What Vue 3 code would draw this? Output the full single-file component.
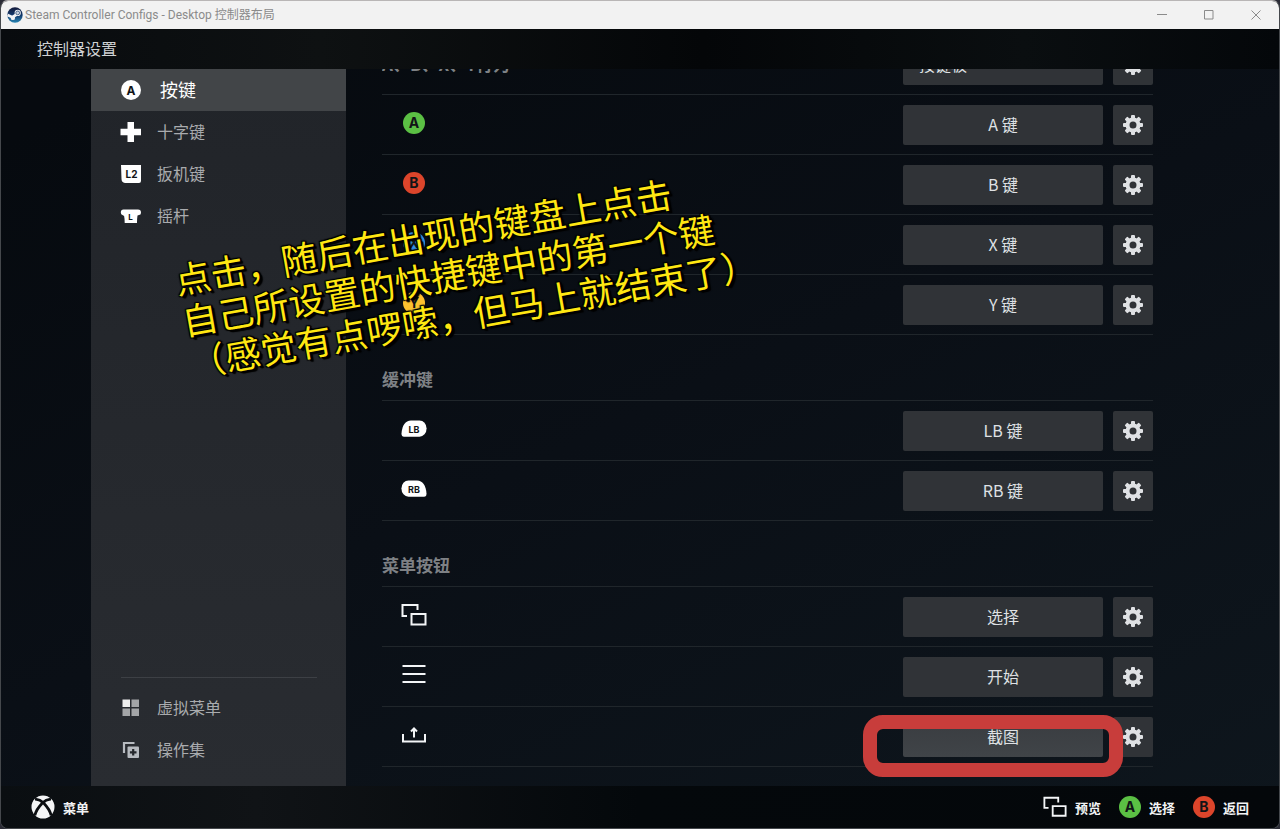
<script setup>
import { ref } from 'vue'

const gearTeeth = [0, 45, 90, 135, 180, 225, 270, 315]

const tabs = [
  { id: 'buttons', label: '按键' },
  { id: 'dpad', label: '十字键' },
  { id: 'triggers', label: '扳机键' },
  { id: 'sticks', label: '摇杆' },
]
const extras = [
  { id: 'virtual', label: '虚拟菜单' },
  { id: 'sets', label: '操作集' },
]
const active = ref('buttons')
const behavior = ref('pad')

const groups = [
  {
    id: 'face',
    title: 'A、B、X、Y行为',
    select: true,
    rows: [
      { id: 'a', label: 'A 键', letter: 'A', color: '#5bc044' },
      { id: 'b', label: 'B 键', letter: 'B', color: '#dc452b' },
      { id: 'x', label: 'X 键', letter: 'X', color: '#2f8fe8' },
      { id: 'y', label: 'Y 键', letter: 'Y', color: '#fdc12f' },
    ],
  },
  {
    id: 'bumpers',
    title: '缓冲键',
    rows: [
      { id: 'lb', label: 'LB 键' },
      { id: 'rb', label: 'RB 键' },
    ],
  },
  {
    id: 'menu',
    title: '菜单按钮',
    rows: [
      { id: 'view', label: '选择' },
      { id: 'start', label: '开始' },
      { id: 'share', label: '截图', marked: true },
    ],
  },
]
</script>

<template>
  <div class="window">
    <header class="titlebar">
      <svg class="steam" viewBox="0 0 16 16" aria-hidden="true">
        <defs>
          <linearGradient id="steamFill" x1="0" y1="0" x2="0" y2="1">
            <stop offset="0" stop-color="#141b3c" />
            <stop offset="0.5" stop-color="#12386a" />
            <stop offset="1" stop-color="#2a86b4" />
          </linearGradient>
        </defs>
        <circle cx="8" cy="8" r="7.7" fill="url(#steamFill)" />
        <path d="M.5 8 5.500 10.200 9.500 7.500" fill="none" stroke="#f2f4f6" stroke-width="2.800" />
        <circle cx="10.700" cy="5.900" r="3.100" fill="#f2f4f6" />
        <circle cx="10.700" cy="5.900" r="1.900" fill="#c9d3de" stroke="#173a68" stroke-width="0.700" />
        <circle cx="5.900" cy="10.900" r="2.200" fill="#f2f4f6" />
      </svg>
      <span class="caption">Steam Controller Configs - Desktop 控制器布局</span>
      <div class="controls">
        <button type="button" aria-label="最小化"><svg viewBox="0 0 10 10"><path d="M0 4.500h10" /></svg></button>
        <button type="button" aria-label="最大化"><svg viewBox="0 0 10 10"><path d="M.5.5h8.500v8.500h-8.500z" /></svg></button>
        <button type="button" aria-label="关闭"><svg viewBox="0 0 10 10"><path d="M.5.5l9 9M9.500.5l-9 9" /></svg></button>
      </div>
    </header>

    <h1 class="heading">控制器设置</h1>

    <main class="body">
      <nav class="sidebar">
        <button
          v-for="t in tabs"
          :key="t.id"
          type="button"
          class="tab"
          :class="{ active: t.id === active }"
          @click="active = t.id"
        >
          <svg v-if="t.id === 'buttons'" class="tab-icon" viewBox="0 0 22 22">
            <circle cx="11" cy="11" r="10" fill="#fff" />
            <text x="11" y="15.500" class="glyph wide-glyph" font-size="12">A</text>
          </svg>
          <svg v-else-if="t.id === 'dpad'" class="tab-icon" viewBox="0 0 22 22">
            <path d="M7.500 1h6.500v6.700h7v6.500h-7v6.800h-6.500v-6.800h-7v-6.500h7z" fill="#fff" />
          </svg>
          <svg v-else-if="t.id === 'triggers'" class="tab-icon" viewBox="0 0 22 22">
            <path d="M1 2h20v16q0 2-2 2H5q-3.500-.5-3.500-4z" fill="#fff" />
            <text x="11.500" y="15" class="glyph wide-glyph" font-size="10">L2</text>
          </svg>
          <svg v-else class="tab-icon" viewBox="0 0 22 22">
            <path d="M3.500 4.500h14.500q3 0 3 3.200 0 2.300-2 2.300l-1.500.5q-.5 3-.5 7.500H4.700q0-4.500-.6-7l-1.600-1Q.8 9.500.8 7.500q0-3 2.700-3z" fill="#fff" />
            <text x="10.500" y="14.500" class="glyph wide-glyph" font-size="8">L</text>
          </svg>
          <span>{{ t.label }}</span>
        </button>
        <div class="spacer"></div>
        <hr class="rule" />
        <button v-for="t in extras" :key="t.id" type="button" class="tab">
          <svg v-if="t.id === 'virtual'" class="tab-icon" viewBox="0 0 22 22">
            <path d="M2.500 2.500h7.500v7.500h-7.500z" fill="#eee" />
            <path d="M11.500 2.500h7.500v7.500h-7.500zM2.500 11.500h7.500v7.500h-7.500zM11.500 11.500h7.500v7.500h-7.500z" fill="#a3a5a7" />
          </svg>
          <svg v-else class="tab-icon" viewBox="0 0 22 22">
            <path d="M4 14V4h10.500" fill="none" stroke="#b7bbc0" stroke-width="2.200" />
            <rect x="7.500" y="7.500" width="11.500" height="11.500" rx="1" fill="#b7bbc0" />
            <path d="M13.200 10v6.600M9.900 13.300h6.600" stroke="#25282d" stroke-width="2.200" />
          </svg>
          <span>{{ t.label }}</span>
        </button>
      </nav>

      <div class="list">
        <section v-for="g in groups" :key="g.id">
          <div v-if="g.select" class="row lead">
            <label class="group-title" for="behavior">{{ g.title }}</label>
            <select id="behavior" v-model="behavior" class="binding">
              <option value="pad">按键板</option>
            </select>
            <button type="button" class="gear" :aria-label="g.title + '设置'">
              <svg viewBox="0 0 20 20">
                <rect v-for="r in gearTeeth" :key="r" x="8" y="0" width="4" height="5" rx="1" :transform="`rotate(${r} 10 10)`" />
                <circle cx="10" cy="10" r="5.500" class="ring" />
              </svg>
            </button>
          </div>
          <h2 v-else class="group-title titled">{{ g.title }}</h2>

          <div v-for="r in g.rows" :key="r.id" class="row">
            <div class="row-icon">
              <svg v-if="r.letter" viewBox="0 0 26 26">
                <circle cx="13" cy="13" r="11" :fill="r.color" />
                <text x="13" y="18" class="glyph wide-glyph" font-size="14">{{ r.letter }}</text>
              </svg>
              <svg v-else-if="r.id === 'lb'" viewBox="0 0 26 26">
                <path d="M10 4.500h8.500a7 8 0 0 1 0 16.200H3Q.5 20.700.5 17.500 1.500 5 10 4.500z" fill="#fff" />
                <text x="13" y="16.500" class="glyph wide-glyph" font-size="9">LB</text>
              </svg>
              <svg v-else-if="r.id === 'rb'" viewBox="0 0 26 26">
                <path d="M16 4.500H7.500a7 8 0 0 0 0 16.200H23q2.500 0 2.500-3.200Q24.500 5 16 4.500z" fill="#fff" />
                <text x="13" y="16.500" class="glyph wide-glyph" font-size="9">RB</text>
              </svg>
              <svg v-else-if="r.id === 'view'" viewBox="0 0 26 26" class="line">
                <path d="M6 14H1.500V3h15v5M10.500 12h14v10.500h-14z" />
              </svg>
              <svg v-else-if="r.id === 'start'" viewBox="0 0 26 26" class="line">
                <path d="M1.500 4h23M1.500 12h23M1.500 20h23" />
              </svg>
              <svg v-else viewBox="0 0 26 26" class="line">
                <path d="M2 12v7.500h22V12M13 15.500V7M10 9.500l3-3 3 3" />
              </svg>
            </div>
            <div class="binding-wrap">
              <button type="button" class="binding" :class="{ lit: r.marked }">{{ r.label }}</button>
              <span v-if="r.marked" class="marker"></span>
            </div>
            <button type="button" class="gear" :aria-label="r.label + '设置'">
              <svg viewBox="0 0 20 20">
                <rect v-for="t in gearTeeth" :key="t" x="8" y="0" width="4" height="5" rx="1" :transform="`rotate(${t} 10 10)`" />
                <circle cx="10" cy="10" r="5.500" class="ring" />
              </svg>
            </button>
          </div>
        </section>
      </div>
    </main>

    <footer class="footer">
      <button type="button" class="hint">
        <svg viewBox="0 0 24 24" class="xbox">
          <circle cx="12" cy="12" r="11.500" fill="#f4f5f6" />
          <path d="M4 4.500Q8 3.500 12 7.500 16 3.500 20 4.500M11 8.500Q5.500 14 3.800 20.500M13 8.500Q18.500 14 20.200 20.500" fill="none" stroke="#0b0e11" stroke-width="2.800" />
        </svg>
        <span>菜单</span>
      </button>
      <div class="spacer"></div>
      <button type="button" class="hint">
        <svg viewBox="0 0 26 26" class="wide line"><path d="M6 14H1.500V3h15v5M10.500 12h14v10.500h-14z" /></svg>
        <span>预览</span>
      </button>
      <button type="button" class="hint">
        <svg viewBox="0 0 22 22">
          <circle cx="11" cy="11" r="11" fill="#5bc044" />
          <text x="11" y="16" class="glyph wide-glyph" font-size="14">A</text>
        </svg>
        <span>选择</span>
      </button>
      <button type="button" class="hint">
        <svg viewBox="0 0 22 22">
          <circle cx="11" cy="11" r="11" fill="#dc452b" />
          <text x="11" y="16" class="glyph wide-glyph" font-size="14">B</text>
        </svg>
        <span>返回</span>
      </button>
    </footer>

    <p class="note">
      点击，随后在出现的键盘上点击<br />自己所设置的快捷键中的第一个键<br />（感觉有点啰嗦，但马上就结束了）
    </p>
  </div>
</template>

<style>
body {
  margin: 0;
  background: #2b2c36;
}
</style>

<style scoped>
.window {
  position: relative;
  box-sizing: border-box;
  height: 100vh;
  display: flex;
  flex-direction: column;
  overflow: hidden;
  border: 1px solid #45484c;
  border-top-color: #b9b6b6;
  border-radius: 8px;
  background: linear-gradient(155deg, #060a0f 10%, #0a0f16 50%, #0e161d 100%);
  color: #dfe1e4;
  font-family: 'Noto Sans CJK SC', sans-serif;
  font-size: 16px;
}
button,
select {
  margin: 0;
  padding: 0;
  border: 0;
  background: none;
  color: inherit;
  font: inherit;
  cursor: pointer;
}
svg {
  display: block;
  flex: none;
}
.glyph {
  fill: #111417;
  font-family: 'Noto Sans CJK SC', sans-serif;
  font-weight: 700;
  text-anchor: middle;
}
.wide-glyph {
  font-family: Inter, sans-serif;
}
.spacer {
  flex: 1;
}

.titlebar {
  flex: none;
  display: flex;
  align-items: center;
  height: 28px;
  background: #f2f2f2;
  color: #8b8b8b;
}
.steam {
  width: 16px;
  height: 16px;
  margin-left: 6px;
}
.caption {
  flex: 1;
  margin-left: 2px;
  font-family: Roboto, 'Noto Sans CJK SC', sans-serif;
  font-size: 12px;
  line-height: 16px;
}
.controls {
  display: flex;
  align-self: stretch;
}
.controls button {
  display: grid;
  place-items: center;
  width: 47px;
}
.controls svg {
  width: 10px;
  height: 10px;
  fill: none;
  stroke: #8b8b8b;
}

.heading {
  flex: none;
  margin: 0;
  padding: 0 0 2px 36px;
  background: linear-gradient(90deg, #080b0e, #0e1112 25%, #040608 55%, #0a0e10 80%, #04070a);
  color: #cfd1d3;
  font-size: 16px;
  font-weight: 400;
  line-height: 38px;
}

.body {
  flex: 1;
  min-height: 0;
  display: flex;
  padding: 0 126px 0 90px;
  gap: 36px;
}
.sidebar {
  flex: none;
  box-sizing: border-box;
  display: flex;
  flex-direction: column;
  width: 255px;
  padding-bottom: 15px;
  background: linear-gradient(#212429, #292c31);
}
.tab {
  display: flex;
  align-items: center;
  gap: 15px;
  height: 42px;
  padding-left: 29px;
  color: #a9abae;
}
.tab span {
  padding-bottom: 2px;
}
.tab.active {
  gap: 18px;
  background: #424548;
  color: #fff;
  font-size: 18px;
}
.tab-icon {
  width: 22px;
  height: 22px;
}
.rule {
  width: 196px;
  margin: 0 0 9px 30px;
  border: 0;
  border-top: 1px solid #3d4045;
}

.list {
  flex: 1;
  display: flex;
  flex-direction: column;
  justify-content: flex-end;
  overflow: hidden;
  padding-bottom: 19px;
}
.row {
  display: flex;
  align-items: flex-start;
  padding: 10px 0 9px;
  border-bottom: 1px solid #20262b;
}
.row-icon {
  display: grid;
  place-items: center;
  width: 64px;
  height: 36px;
}
.row-icon svg {
  width: 26px;
  height: 26px;
}
.line {
  fill: none;
  stroke: #f3f5f7;
  stroke-width: 2;
}
.group-title {
  margin: 0;
  color: #7e8185;
  font-size: 17px;
  font-weight: 700;
  line-height: 38px;
}
.lead .group-title {
  margin-right: auto;
}
.titled {
  padding: 25px 0 2px;
  border-bottom: 1px solid #20262b;
}
.binding-wrap {
  position: relative;
  margin-left: auto;
}
.binding {
  display: block;
  width: 200px;
  height: 40px;
  padding-bottom: 2px;
  border-radius: 2px;
  background: #303337;
  color: #dfe1e4;
}
select.binding {
  appearance: none;
  padding-left: 16px;
}
.binding.lit {
  background: linear-gradient(#393c40, #404448);
}
.marker {
  position: absolute;
  z-index: 1;
  inset: -2px -20px -20px -40px;
  border: 14px solid #c83d3b;
  border-radius: 20px;
  pointer-events: none;
}
.gear {
  display: grid;
  place-items: center;
  width: 40px;
  height: 40px;
  margin-left: 10px;
  border-radius: 2px;
  background: #303337;
}
.gear svg {
  width: 20px;
  height: 20px;
  fill: #dfe1e4;
}
.gear .ring {
  fill: none;
  stroke: #dfe1e4;
  stroke-width: 4;
}

.footer {
  flex: none;
  display: flex;
  align-items: center;
  gap: 18px;
  height: 42px;
  padding: 0 30px;
  background: linear-gradient(90deg, #0a0e11, #101316 20%, #04080b 50%, #04070a);
}
.hint {
  display: flex;
  align-items: center;
  gap: 8px;
  color: #f2f3f4;
  font-size: 13px;
  font-weight: 700;
}
.hint svg {
  width: 22px;
  height: 22px;
}
.hint .wide,
.hint .xbox {
  width: 24px;
  height: 24px;
}

.note {
  position: absolute;
  left: 170px;
  top: 257px;
  margin: 0;
  color: #ffe712;
  font-size: 36px;
  line-height: 42px;
  text-shadow: 3px 3px 1px #000, 2px 2px 0 #000, 1px -1px 1px #000, -1px 1px 1px #000, -1px -1px 1px #000, 2px 0 1px #000;
  transform: rotate(-10deg);
  transform-origin: 0 0;
  white-space: nowrap;
  pointer-events: none;
}
</style>
